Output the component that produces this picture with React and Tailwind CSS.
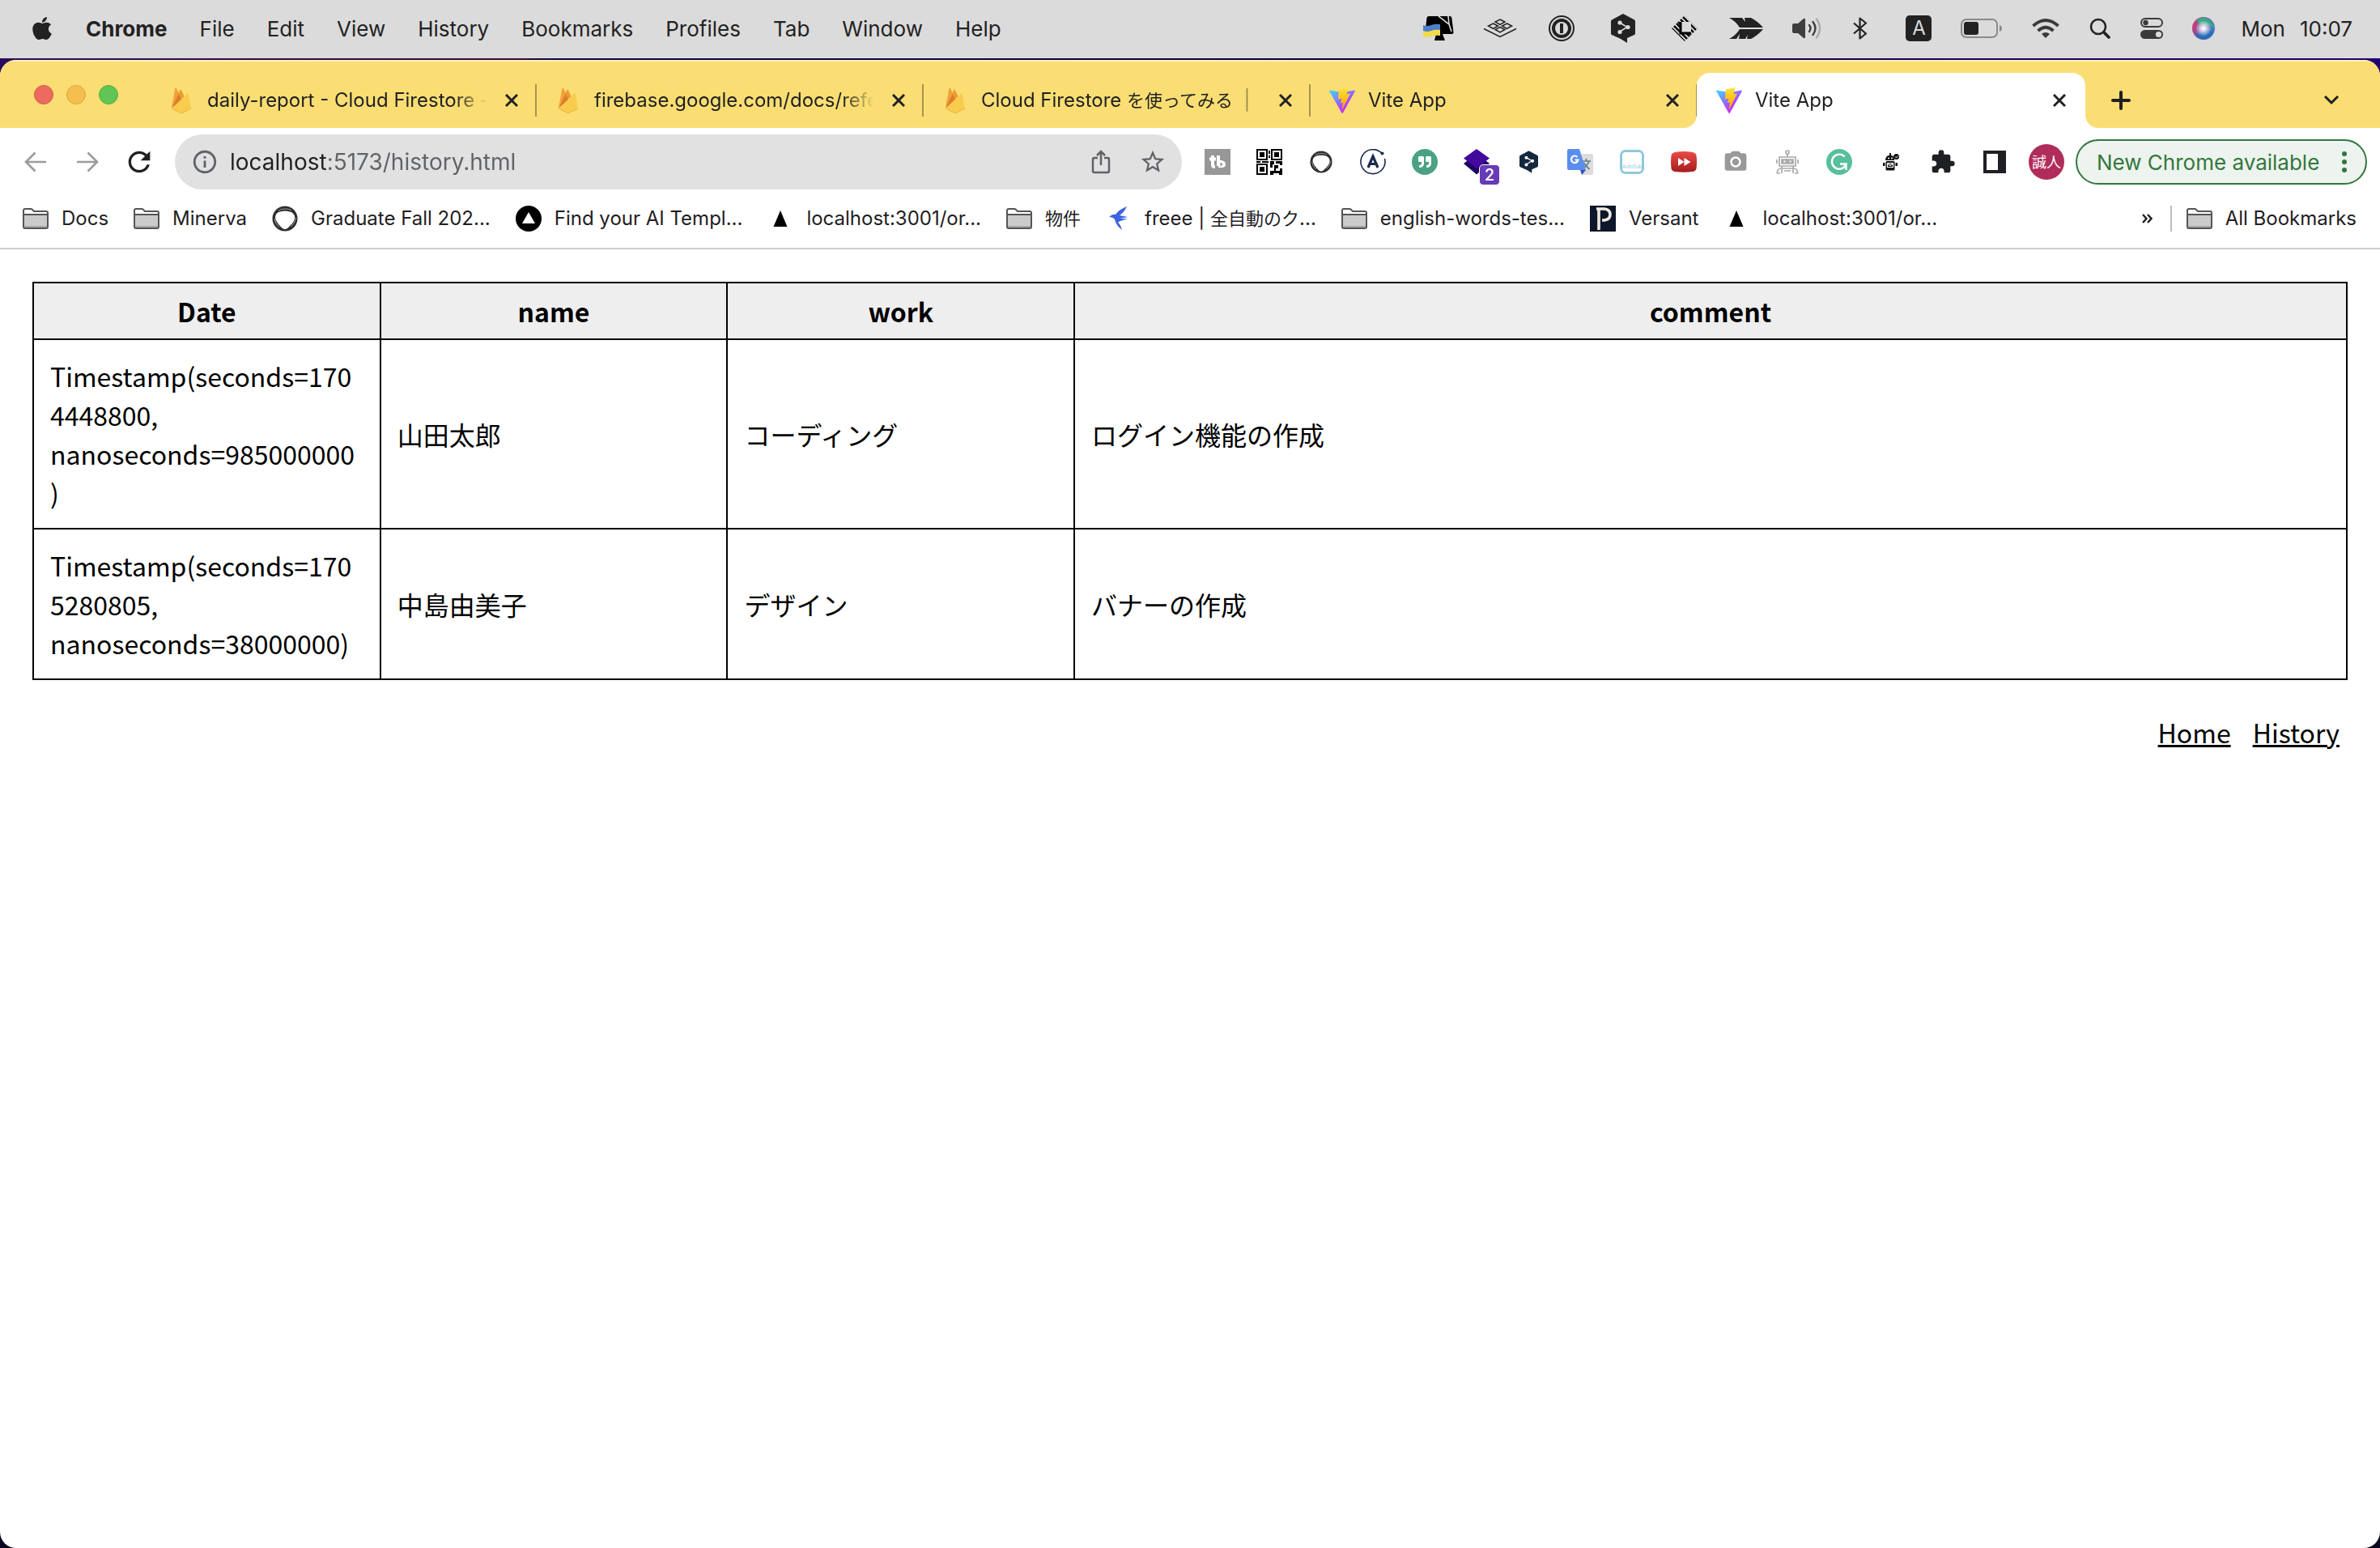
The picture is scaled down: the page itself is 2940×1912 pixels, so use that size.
import React from "react";
import { FaApple, FaQuoteRight } from "react-icons/fa";
import {
  MdExtension,
  MdInfoOutline,
  MdPhotoCamera,
  MdRefresh,
  MdStarBorder,
} from "react-icons/md";

const menus = ["File", "Edit", "View", "History", "Bookmarks", "Profiles", "Tab", "Window", "Help"];

/* ---------- Menu bar status icons ---------- */

function MonitorFlagIcon() {
  return (
    <svg viewBox="0 0 38 32" className="h-8 w-[38px]">
      <path d="M7 1h26q2 0 2.300 2l2.200 18q.2 2-2 2H4q-2 0-1.500-2L4.500 3Q5 1 7 1z" fill="#000" />
      <path d="M16 23h8l3 8H14z" fill="#000" />
      <path d="M19 1l13 10 3 9M31 1l1 10" stroke="#dbdbdb" strokeWidth="1.600" fill="none" />
      <path d="M0 12q5 2 10 0t11-1v8q-6-1-11 1t-10 0z" fill="#4f7fc9" />
      <path d="M0 19q5 2 10 0t11-1v7q-6-1-11 1t-10 0z" fill="#f2dc4a" />
    </svg>
  );
}

function TilesIcon() {
  return (
    <svg viewBox="0 0 42 24" className="h-6 w-[42px]" fill="none" stroke="#222" strokeWidth="1.500">
      <path d="M21 1l6 3-6 3.500L15 4zM12.500 6l6 3-6 3.500-6-3.500zM29.500 6l6 3-6 3.500-6-3.500zM21 10.500l6 3-6 3.500-6-3.500z" />
      <path d="M1 12.500l20 10 20-10" />
    </svg>
  );
}

function OnePasswordIcon() {
  return (
    <svg viewBox="0 0 32 32" className="h-8 w-[38px]">
      <circle cx="16" cy="16" r="15" fill="none" stroke="#222" strokeWidth="2" />
      <circle cx="16" cy="16" r="10" fill="none" stroke="#222" strokeWidth="4" />
      <rect x="14" y="10" width="4" height="12" fill="#222" />
    </svg>
  );
}

function DeepLIcon({ className, fill, dot }) {
  return (
    <svg viewBox="0 0 30 36" className={className}>
      <path d="M15 0l14 7.500q1 .5 1 2V24q0 1.500-1 2l-9 4v6l-8-5L1 26q-1-.5-1-2V9.500Q0 8 1 7.500z" fill={fill} />
      <g stroke={dot} strokeWidth="1.600" fill={dot}>
        <path d="M11 11l9 5.500-9 5.500" fill="none" />
        <circle cx="11" cy="11" r="1.800" />
        <circle cx="21" cy="16.500" r="1.800" />
        <circle cx="11" cy="22.500" r="1.800" />
      </g>
    </svg>
  );
}

function ChipIcon() {
  return (
    <svg viewBox="0 0 32 32" className="h-8 w-[38px]">
      <defs>
        <clipPath id="chipRing">
          <path d="M16 0l16 16-16 16L0 16zM12 8v13h12V8z" clipRule="evenodd" />
        </clipPath>
      </defs>
      <g clipPath="url(#chipRing)" stroke="#000" strokeWidth="2.400">
        <path d="M-8 8l32 32M-5 5l32 32M-2 2l32 32M1 1l32 32M5-1l32 32M10-2l32 32M15-3l32 32" />
      </g>
      <path d="M11 8v14h13" fill="none" stroke="#000" strokeWidth="3" />
    </svg>
  );
}

function FeatherIcon() {
  return (
    <svg viewBox="0 0 42 26" className="h-[26px] w-[42px]" fill="#222">
      <path d="M0 0h16l4 5-1-5h8q8 4 15 12H13Q8 4 0 0z" />
      <path d="M0 26h9l4-6-1 6h8l3-5-1 5h5q8-4 15-12H13Q8 22 0 26z" />
    </svg>
  );
}

function SpeakerIcon() {
  return (
    <svg viewBox="0 0 36 26" className="h-[26px] w-9">
      <path d="M0 9q0-2 2-2h5l7-6q2-1 2 1v22q0 2-2 1l-7-6H2q-2 0-2-2z" fill="#3e3e3e" />
      <g fill="none" strokeWidth="2.400" strokeLinecap="round">
        <path d="M21 9q3 4 0 8" stroke="#3e3e3e" />
        <path d="M25.500 5q6 8 0 16" stroke="#3e3e3e" />
        <path d="M30 1.500q8 11.500 0 23" stroke="#aaa" />
      </g>
    </svg>
  );
}

function BluetoothIcon() {
  return (
    <svg viewBox="0 0 24 28" className="h-7 w-6" fill="none" stroke="#222" strokeWidth="2.200" strokeLinejoin="round">
      <path d="M4 7.500l15 13-7.500 6V1.500l7.500 6-15 13" />
    </svg>
  );
}

function BatteryIcon() {
  return (
    <svg viewBox="0 0 52 24" className="h-6 w-[52px]">
      <rect x="1" y="1" width="44" height="22" rx="6" fill="none" stroke="#8a8a8a" strokeWidth="2" />
      <rect x="4" y="4" width="18" height="16" rx="3" fill="#222" />
      <path d="M48 8q3 1 3 4t-3 4z" fill="#8a8a8a" />
    </svg>
  );
}

function WifiIcon() {
  return (
    <svg viewBox="0 0 34 24" className="h-6 w-[34px]" fill="none" stroke="#3a3a3a" strokeWidth="3.800">
      <path d="M1.500 9q15.500-14 31 0" />
      <path d="M7.500 15q9.500-8.500 19 0" />
      <path d="M12 19q5-4 10 0l-5 5z" fill="#3a3a3a" stroke="none" />
    </svg>
  );
}

function SearchIcon() {
  return (
    <svg viewBox="0 0 28 28" className="size-7" fill="none" stroke="#222" strokeLinecap="round">
      <circle cx="12" cy="12" r="9" strokeWidth="2.600" />
      <path d="M19 19l6 6" strokeWidth="3.800" />
    </svg>
  );
}

function ControlCenterIcon() {
  return (
    <svg viewBox="0 0 28 26" className="h-[26px] w-7">
      <rect x="1" y="1" width="26" height="10" rx="5" fill="none" stroke="#3a3a3a" strokeWidth="2" />
      <circle cx="6.500" cy="6" r="3.200" fill="#3a3a3a" />
      <rect x="0" y="15" width="28" height="11" rx="5.500" fill="#3a3a3a" />
      <circle cx="22.500" cy="20.500" r="3.600" fill="#dbdbdb" />
    </svg>
  );
}

function SiriIcon() {
  return (
    <svg viewBox="0 0 28 28" className="size-7">
      <defs>
        <radialGradient id="siriGlow">
          <stop offset="0" stopColor="#fff" />
          <stop offset="0.3" stopColor="#fff" stopOpacity="0.8" />
          <stop offset="1" stopColor="#fff" stopOpacity="0" />
        </radialGradient>
        <linearGradient id="siriBase" x1="0" y1="0.3" x2="1" y2="0.7">
          <stop offset="0" stopColor="#d6336c" />
          <stop offset="0.4" stopColor="#7a5aa6" />
          <stop offset="1" stopColor="#2f7fc9" />
        </linearGradient>
      </defs>
      <circle cx="14" cy="14" r="14" fill="url(#siriBase)" />
      <path d="M5 4q9-7 17 0 5 5 5 10-8-5-13-4Q8 9 5 4z" fill="#3aa787" />
      <path d="M3 20q8 2 12-4 6 1 11 2-4 10-12 10Q7 27 3 20z" fill="#2b6cb8" />
      <circle cx="14" cy="14" r="10" fill="url(#siriGlow)" />
    </svg>
  );
}

function MenuBar() {
  return (
    <header className="flex h-[72px] items-center justify-between bg-[#dbdbdb] pr-[34px] pb-[2px] pl-[38px] text-[26px] text-[#222]">
      <nav className="flex items-center gap-10">
        <button aria-label="Apple menu">
          <FaApple className="h-8 w-[28px]" />
        </button>
        <button className="font-bold">Chrome</button>
        {menus.map((m) => (
          <button key={m}>{m}</button>
        ))}
      </nav>
      <div className="flex items-center gap-8">
        <div className="flex items-center gap-9">
          <MonitorFlagIcon />
          <TilesIcon />
          <OnePasswordIcon />
          <DeepLIcon className="h-9 w-[42px]" fill="#222" dot="#dbdbdb" />
          <ChipIcon />
          <FeatherIcon />
          <SpeakerIcon />
          <BluetoothIcon />
          <span className="flex w-10 justify-end">
            <span className="flex size-8 items-center justify-center rounded-[5px] bg-[#222] text-2xl text-[#dbdbdb]">A</span>
          </span>
          <BatteryIcon />
          <WifiIcon />
          <SearchIcon />
          <ControlCenterIcon />
          <SiriIcon />
        </div>
        <div className="flex gap-[18px]">
          <span>Mon</span>
          <span>10:07</span>
        </div>
      </div>
    </header>
  );
}

/* ---------- Tab strip ---------- */

function FirebaseIcon() {
  return (
    <svg viewBox="0 0 24 32" className="h-8 w-8 shrink-0">
      <path d="M0 25L4.500.8q.5-1.200 1.200 0L9 7z" fill="#f0a13a" />
      <path d="M0 25.500L10.500 3q.6-1 1.200 0l4 8z" fill="#f09a35" />
      <path d="M0 25.500L8.500 8l4.500 8z" fill="#dd7f2d" />
      <path d="M0 26L19.500 7.500q1-.8 1.300.4L24 26l-10.500 5.500q-1.500.8-3 0z" fill="#f8cc4d" />
      <path d="M0 25.500l10.500 5.500q1.500.8 3 0L24 25.500v.7l-10.500 5.500q-1.500.6-3 0L0 26.200z" fill="#e3ac45" />
    </svg>
  );
}

function ViteIcon({ id }) {
  return (
    <svg viewBox="0 0 256 257" className="h-8 w-8 shrink-0">
      <defs>
        <linearGradient id={`${id}a`} x1="-.828%" x2="57.636%" y1="7.652%" y2="78.411%">
          <stop offset="0%" stopColor="#41D1FF" />
          <stop offset="100%" stopColor="#BD34FE" />
        </linearGradient>
        <linearGradient id={`${id}b`} x1="43.376%" x2="50.316%" y1="2.242%" y2="89.03%">
          <stop offset="0%" stopColor="#FFEA83" />
          <stop offset="8.333%" stopColor="#FFDD35" />
          <stop offset="100%" stopColor="#FFA800" />
        </linearGradient>
      </defs>
      <path
        fill={`url(#${id}a)`}
        d="M255.153 37.938L134.897 252.976c-2.483 4.440-8.862 4.466-11.382.048L.875 37.958c-2.746-4.814 1.371-10.646 6.827-9.670l120.385 21.517a6.537 6.537 0 0 0 2.322-.004l117.867-21.483c5.438-.991 9.574 4.796 6.877 9.620Z"
      />
      <path
        fill={`url(#${id}b)`}
        d="M185.432.063L96.440 17.501a3.268 3.268 0 0 0-2.634 3.014l-5.474 92.456a3.268 3.268 0 0 0 3.997 3.378l24.777-5.718c2.318-.535 4.413 1.507 3.936 3.838l-7.361 36.047c-.495 2.426 1.782 4.500 4.151 3.780l15.304-4.649c2.372-.720 4.652 1.360 4.150 3.788l-11.698 56.621c-.732 3.542 3.979 5.473 5.943 2.437l1.313-2.028l72.516-144.720c1.215-2.423-.880-5.186-3.540-4.672l-25.505 4.922c-2.396.462-4.435-1.770-3.759-4.114l16.646-57.705c.677-2.350-1.370-4.583-3.769-4.113Z"
      />
    </svg>
  );
}

function CloseIcon() {
  return (
    <svg viewBox="0 0 16 16" className="size-4" stroke="currentColor" strokeWidth="3">
      <path d="M1 1l14 14M15 1L1 15" />
    </svg>
  );
}

function Flare({ className }) {
  return (
    <svg viewBox="0 0 16 16" className={className} fill="#fff">
      <path d="M16 0v16H0A16 16 0 0 0 16 0z" />
    </svg>
  );
}

function Tab({ icon, title, active }) {
  const shape = active
    ? "relative flex h-[68px] w-[480px] items-center rounded-t-2xl bg-white pl-6"
    : "relative flex h-[68px] w-[478px] items-center pl-6";
  return (
    <div className={shape}>
      <button className="flex min-w-0 flex-1 items-center gap-4 text-left">
        {icon}
        <span className="min-w-0 flex-1 whitespace-pre [mask-image:linear-gradient(90deg,#000_86%,transparent_97%)]">
          {title}
        </span>
      </button>
      <button aria-label="Close tab" className={active ? "mr-6 ml-3" : "mr-[21px] ml-3"}>
        <CloseIcon />
      </button>
      {active ? (
        <>
          <Flare className="absolute bottom-0 -left-4 size-4" />
          <Flare className="absolute -right-4 bottom-0 size-4 -scale-x-100" />
        </>
      ) : (
        <span className="-mr-px h-10 w-[2px] bg-[#a89351]" />
      )}
    </div>
  );
}

function TabStrip() {
  return (
    <div className="flex h-[84px] items-end border-t-2 border-[#fdf1bd] bg-[#fade73] pr-[50px] text-[24px]">
      <div className="flex h-[82px] w-[184px] shrink-0 items-center gap-4 pl-[42px]">
        <button aria-label="Close window" className="size-6 rounded-full border border-[#d9574c] bg-[#ec6a5e]" />
        <button aria-label="Minimize window" className="size-6 rounded-full border border-[#dfa53d] bg-[#f4bf4f]" />
        <button aria-label="Zoom window" className="size-6 rounded-full border border-[#52ae43] bg-[#61c555]" />
      </div>
      <Tab icon={<FirebaseIcon />} title="daily-report - Cloud Firestore -" />
      <Tab icon={<FirebaseIcon />} title="firebase.google.com/docs/refe" />
      <Tab
        icon={<FirebaseIcon />}
        title={
          <>
            Cloud Firestore <span className="text-[22px]">を使ってみる</span>
            {"  |"}
          </>
        }
      />
      <Tab icon={<ViteIcon id="v1" />} title="Vite App" />
      <Tab icon={<ViteIcon id="v2" />} title="Vite App" active />
      <div className="flex h-[68px] flex-1 items-center justify-between pl-8">
        <button aria-label="New tab">
          <svg viewBox="0 0 24 24" className="size-6" stroke="#1f2023" strokeWidth="4" strokeLinecap="round">
            <path d="M12 2v20M2 12h20" />
          </svg>
        </button>
        <button aria-label="Search tabs">
          <svg viewBox="0 0 20 12" className="h-3 w-5" fill="none" stroke="#1f2023" strokeWidth="3">
            <path d="M2 1l8 8 8-8" />
          </svg>
        </button>
      </div>
    </div>
  );
}

/* ---------- Toolbar ---------- */

function ArrowIcon({ className }) {
  return (
    <svg viewBox="0 0 28 26" className={className} fill="none" stroke="#9b9b9b" strokeWidth="2.600">
      <path d="M27 13H2M13.500 1.500L2 13l11.500 11.500" />
    </svg>
  );
}

function ShareIcon() {
  return (
    <svg viewBox="0 0 24 30" className="h-[30px] w-6" fill="none" stroke="#5f6368" strokeWidth="2.500">
      <path d="M8 10H4q-2 0-2 2v14q0 2 2 2h16q2 0 2-2V12q0-2-2-2h-4M12 19V2M7 7l5-5 5 5" />
    </svg>
  );
}

function SketchRing({ className }) {
  return (
    <svg viewBox="0 0 32 32" className={className}>
      <circle cx="16" cy="16" r="15.500" fill="#2e2e2e" />
      <path d="M8 8q8-3 16 0 5 3 4 8-1 5-6 9-3 4-6 4-3 0-6-4-5-5-6-10 0-5 4-7z" fill="#fff" />
      <g fill="none" stroke="#bbb" strokeWidth="0.800">
        <path d="M8 6q8-4 16-.5" />
        <path d="M3 16q1 7 6 10.500M29.500 15q-1 7-6 11" />
      </g>
    </svg>
  );
}

function TubeIcon() {
  return (
    <svg viewBox="0 0 32 32" className="size-8">
      <rect width="32" height="32" fill="#979797" />
      <path d="M10 8v12q0 2 3 2M6 12.500h8M17 8v13" stroke="#fff" strokeWidth="4" fill="none" />
      <path d="M17 14h4q5 1 5 5t-5 4h-4z" fill="#fff" />
      <path d="M19.500 16.500l3.500 2.500-3.500 2.500z" fill="#979797" />
    </svg>
  );
}

function QrIcon() {
  return (
    <svg viewBox="0 0 32 32" className="size-8">
      <g fill="none" stroke="#000" strokeWidth="2">
        <rect x="1" y="1" width="12" height="12" />
        <rect x="19" y="1" width="12" height="12" />
        <rect x="1" y="19" width="12" height="12" />
      </g>
      <path
        d="M4 4h6v6H4zM22 4h6v6h-6zM4 22h6v6H4zM15 2h2v4h-2zM15 8h2v3h-2zM0 15h5v2H0zM7 15h8v2H7zM17 15h5v4h-2v4h-3zM24 15h8v5h-3v-2h-5zM22 20h5v4h-3v3h5v-3h3v8h-4v-2h-7v2h-4v-5h5z"
        fill="#000"
      />
    </svg>
  );
}

function ApolloIcon() {
  return (
    <svg viewBox="0 0 32 32" className="size-8">
      <path d="M27 5.500A15 15 0 1 0 30.500 12" fill="none" stroke="#1b2a4e" strokeWidth="1.600" />
      <circle cx="27.500" cy="5.500" r="2" fill="#1b2a4e" />
      <path d="M10 23l6-14 6 14M12.500 18.500h7" fill="none" stroke="#1b2a4e" strokeWidth="3.200" />
    </svg>
  );
}

function LayersIcon() {
  return (
    <span className="relative">
      <svg viewBox="0 0 32 32" className="size-8">
        <path d="M0 18l16 13.500L32 18l-4-3H4z" fill="#1c0066" />
        <path d="M16 0l16 11.500L16 24 0 11.500z" fill="#430a9e" />
      </svg>
      <span className="absolute top-[19px] left-[19px] flex size-[26px] items-center justify-center rounded-[5px] border border-white bg-[#673ab7] text-[20px] font-medium text-white">
        2
      </span>
    </span>
  );
}

function TranslateIcon() {
  return (
    <svg viewBox="0 0 32 32" className="size-8">
      <path d="M13 6h17q2 0 2 2v22q0 2-2 2H18z" fill="#dcdcdc" />
      <g fill="none" stroke="#607d8b" strokeWidth="1.700">
        <path d="M18 15h11M23.500 12v3M27 15q-2 6-8 9M20.500 17q2 4 7 8" />
      </g>
      <path d="M16 26h7l-5 6z" fill="#3a4fb8" />
      <path d="M2 0h13l8 26H2q-2 0-2-2V2q0-2 2-2z" fill="#5a8dee" />
      <path d="M12.500 10A4.300 4.300 0 1 0 13.500 13.500H9.500" fill="none" stroke="#fff" strokeWidth="2.200" />
    </svg>
  );
}

function AutoSubIcon() {
  return (
    <span className="flex size-[30px] items-end justify-center rounded-[7px] border-3 border-[#8fc9dd] text-[6px] leading-[12px] text-[#8fc9dd]">
      AutoSub
    </span>
  );
}

function FastForwardIcon() {
  return (
    <svg viewBox="0 0 32 26" className="h-[26px] w-8">
      <defs>
        <linearGradient id="ffRed" x1="0" y1="0" x2="0" y2="1">
          <stop offset="0" stopColor="#ea4c48" />
          <stop offset="1" stopColor="#a51c1c" />
        </linearGradient>
      </defs>
      <path d="M5 1q11-2 22 0 4 1 4.500 4 1 8 0 16-.5 3-4.500 4-11 1.500-22 0-4-1-4.500-4-1-8 0-16Q1 2 5 1z" fill="url(#ffRed)" />
      <path d="M9 8l7.500 5L9 18zM16.500 8l8 5-8 5z" fill="#fff" />
    </svg>
  );
}

function RobotIcon() {
  return (
    <svg viewBox="0 0 28 30" className="h-[30px] w-7" fill="none" stroke="#a9a9a9" strokeWidth="1.700">
      <circle cx="14" cy="3" r="2" />
      <path d="M14 5v4M4 9h20v11H4zM1 12v5M27 12v5M7 20v9M21 20v9M7 23h14M1 29q1-6 5-6M27 29q-1-6-5-6M1 29h4M23 29h4M10 26h8" />
      <path d="M7 12h14v5H7z" fill="#a9a9a9" />
      <path d="M9.500 14.500h2M16.500 14.500h2" stroke="#fff" strokeWidth="2" />
    </svg>
  );
}

function GrammarlyIcon() {
  return (
    <svg viewBox="0 0 32 32" className="size-8">
      <circle cx="16" cy="16" r="16" fill="#57bf9c" />
      <path d="M22.500 9.500A9 9 0 1 0 24.500 18.500H17M24.500 17.500V26" fill="none" stroke="#fff" strokeWidth="2.400" />
    </svg>
  );
}

function MailBotIcon() {
  return (
    <svg viewBox="0 0 20 22" className="h-[22px] w-5">
      <path d="M8 0h2v3h1q3 1 3 6H3q0-5 4-6h1z" fill="#111" />
      <circle cx="7" cy="6.500" r="1" fill="#fff" />
      <circle cx="11" cy="6.500" r="1" fill="#fff" />
      <circle cx="16.500" cy="4.500" r="3.500" fill="#111" />
      <path d="M15 4.500l1.500 1.500 2-2.500" stroke="#fff" fill="none" />
      <rect x="3.500" y="10" width="11" height="11.500" rx="1.500" fill="#111" />
      <path d="M5.500 12.500h7v5h-7zM5.500 12.500l3.500 3 3.500-3" fill="none" stroke="#fff" strokeWidth="1.200" />
      <path d="M0 12h2.500v4H0zM15.500 12H18v4h-2.500z" fill="#111" />
    </svg>
  );
}

const extensions = [
  { name: "TubeBuddy", icon: <TubeIcon /> },
  { name: "QR code", icon: <QrIcon /> },
  { name: "Ring", icon: <SketchRing className="size-7" /> },
  { name: "Apollo", icon: <ApolloIcon /> },
  {
    name: "Quotes",
    icon: (
      <span className="flex size-8 items-center justify-center rounded-full bg-[#4aa283] text-white">
        <FaQuoteRight className="size-4" />
      </span>
    ),
  },
  { name: "Layers", icon: <LayersIcon /> },
  { name: "DeepL", icon: <DeepLIcon className="h-7 w-[23px]" fill="#14283f" dot="#fff" /> },
  { name: "Translate", icon: <TranslateIcon /> },
  { name: "AutoSub", icon: <AutoSubIcon /> },
  { name: "Speed", icon: <FastForwardIcon /> },
  { name: "Camera", icon: <MdPhotoCamera className="size-8 text-[#999]" /> },
  { name: "Robot", icon: <RobotIcon /> },
  { name: "Grammarly", icon: <GrammarlyIcon /> },
  { name: "Mail bot", icon: <MailBotIcon /> },
  { name: "Extensions", icon: <MdExtension className="size-8 text-[#1f2023]" /> },
  {
    name: "Side panel",
    icon: (
      <svg viewBox="0 0 28 28" className="size-7">
        <path d="M0 0h28v28H0zM4 4v20h14V4z" fill="#1f2023" fillRule="evenodd" />
      </svg>
    ),
  },
  {
    name: "Profile",
    icon: (
      <span className="flex size-11 items-center justify-center rounded-full bg-[#b02d5b] text-[18px] whitespace-nowrap text-white">
        誠人
      </span>
    ),
  },
];

function Toolbar() {
  return (
    <div className="flex h-[84px] items-center pr-4 pl-3">
      <button aria-label="Back" className="flex w-16 justify-center">
        <ArrowIcon className="h-[26px] w-7" />
      </button>
      <button aria-label="Forward" className="flex w-16 justify-center">
        <ArrowIcon className="h-[26px] w-7 -scale-x-100" />
      </button>
      <button aria-label="Reload" className="flex w-16 justify-center">
        <MdRefresh className="size-10 text-[#1f2023]" />
      </button>
      <div className="mr-3 ml-3 flex h-[68px] flex-1 items-center rounded-full bg-[#e1e1e1] pr-[19px] pl-5 text-[#5f6368]">
        <button aria-label="View site information">
          <MdInfoOutline className="size-[34px]" />
        </button>
        <input
          aria-label="Address"
          defaultValue="localhost:5173/history.html"
          className="ml-[14px] flex-1 bg-[linear-gradient(90deg,#1f2023_119px,#5f6368_119px)] bg-clip-text text-[28px] text-transparent outline-none"
        />
        <button aria-label="Share" className="mr-[35px]">
          <ShareIcon />
        </button>
        <button aria-label="Bookmark this tab">
          <MdStarBorder className="size-[34px]" />
        </button>
      </div>
      {extensions.map((e) => (
        <button key={e.name} aria-label={e.name} className="flex w-16 items-center justify-center">
          {e.icon}
        </button>
      ))}
      <button className="ml-1 flex h-14 w-[360px] items-center justify-between rounded-full border-2 border-[#33773d] bg-[#edf3ee] pr-[23px] pl-6 text-[26px] text-[#33773d]">
        <span>New Chrome available</span>
        <svg viewBox="0 0 6 26" className="h-[26px] w-[6px]" fill="currentColor">
          <circle cx="3" cy="3" r="3" />
          <circle cx="3" cy="13" r="3" />
          <circle cx="3" cy="23" r="3" />
        </svg>
      </button>
    </div>
  );
}

/* ---------- Bookmarks bar ---------- */

function FolderIcon() {
  return (
    <svg viewBox="0 0 32 26" className="h-[26px] w-8 shrink-0">
      <path d="M1 23V3q0-2 2-2h7q1 0 2 1l2 2h15q2 0 2 2v17q0 2-2 2H3q-2 0-2-2z" fill="#fff" stroke="#555" strokeWidth="2" />
      <path d="M2 8h28v16H2z" fill="#cbcbcb" />
      <path d="M1 8h30" stroke="#555" strokeWidth="2" />
      <path d="M2 22h28v2H2z" fill="#a8a8a8" />
    </svg>
  );
}

function TriangleIcon() {
  return (
    <svg viewBox="0 0 32 32" className="size-8 shrink-0">
      <path d="M16 6l8.500 20h-17z" fill="#000" />
    </svg>
  );
}

function TriangleDiscIcon() {
  return (
    <svg viewBox="0 0 32 32" className="size-8 shrink-0">
      <circle cx="16" cy="16" r="16" fill="#000" />
      <path d="M16 8l8 14H8z" fill="#fff" />
    </svg>
  );
}

function SwallowIcon() {
  return (
    <svg viewBox="0 0 32 32" className="size-8 shrink-0" fill="#3b63e0">
      <path d="M4 14q5-4 8-3Q16 5 26 1q-4 8-9 11l10 2-10 2 10 0-9 3q-1 1-3 1 4 5 5 10Q13 25 11 17q-2-3-7-3z" />
    </svg>
  );
}

function VersantIcon() {
  return (
    <svg viewBox="0 0 32 32" className="size-8 shrink-0">
      <rect width="32" height="32" fill="#0d172b" />
      <path d="M11 4v26M8 4h10q7 1 7 7t-7 7h-3" fill="none" stroke="#efeade" strokeWidth="3.600" />
    </svg>
  );
}

function Ja({ children }) {
  return <span className="text-[22px]">{children}</span>;
}

const bookmarks = [
  { icon: <FolderIcon />, label: "Docs" },
  { icon: <FolderIcon />, label: "Minerva" },
  { icon: <SketchRing className="size-8 shrink-0" />, label: "Graduate Fall 202..." },
  { icon: <TriangleDiscIcon />, label: "Find your AI Templ..." },
  { icon: <TriangleIcon />, label: "localhost:3001/or..." },
  { icon: <FolderIcon />, label: <Ja>物件</Ja> },
  {
    icon: <SwallowIcon />,
    label: (
      <>
        freee | <Ja>全自動のク</Ja>...
      </>
    ),
  },
  { icon: <FolderIcon />, label: "english-words-tes..." },
  { icon: <VersantIcon />, label: "Versant" },
  { icon: <TriangleIcon />, label: "localhost:3001/or..." },
];

function BookmarksBar() {
  return (
    <div className="flex h-[66px] items-center justify-between border-b-2 border-[#cccccc] pr-[29px] pb-2 pl-7 text-[24px] whitespace-nowrap">
      <div className="flex items-center gap-[31px]">
        {bookmarks.map((b, i) => (
          <button key={i} className="flex items-center gap-4">
            {b.icon}
            <span>{b.label}</span>
          </button>
        ))}
      </div>
      <div className="flex items-center">
        <button aria-label="More bookmarks" className="mr-[22px]">
          <svg viewBox="0 0 13 12" className="h-3 w-[13px]" fill="none" stroke="#1f2023" strokeWidth="2.400">
            <path d="M1 1l4.500 5L1 11M7 1l4.500 5L7 11" />
          </svg>
        </button>
        <span className="mr-[18px] h-8 w-[2px] bg-[#bdbdbd]" />
        <button className="flex items-center gap-4">
          <FolderIcon />
          <span>All Bookmarks</span>
        </button>
      </div>
    </div>
  );
}

/* ---------- Page ---------- */

const reports = [
  {
    date: "Timestamp(seconds=1704448800, nanoseconds=985000000)",
    name: "山田太郎",
    work: "コーディング",
    comment: "ログイン機能の作成",
  },
  {
    date: "Timestamp(seconds=1705280805, nanoseconds=38000000)",
    name: "中島由美子",
    work: "デザイン",
    comment: "バナーの作成",
  },
];

function Page() {
  return (
    <main className="flex-1 p-10 font-['Noto_Sans_CJK_JP',sans-serif] text-[32px] leading-[48px] text-black">
      <table className="w-full table-fixed border-collapse border-2 border-black">
        <thead>
          <tr className="bg-[#eeeeee]">
            <th className="w-[15%] border-2 border-black px-5 py-[10px] font-bold">Date</th>
            <th className="w-[15%] border-2 border-black px-5 py-[10px] font-bold">name</th>
            <th className="w-[15%] border-2 border-black px-5 py-[10px] font-bold">work</th>
            <th className="border-2 border-black px-5 py-[10px] font-bold">comment</th>
          </tr>
        </thead>
        <tbody>
          {reports.map((r) => (
            <tr key={r.date}>
              <td className="border-2 border-black p-5 [overflow-wrap:anywhere]">{r.date}</td>
              <td className="border-2 border-black p-5">{r.name}</td>
              <td className="border-2 border-black p-5">{r.work}</td>
              <td className="border-2 border-black p-5">{r.comment}</td>
            </tr>
          ))}
        </tbody>
      </table>
      <nav className="mt-10 flex justify-end gap-[27px] pr-[10px]">
        <a href="#home" className="underline">
          Home
        </a>
        <a href="#history" className="underline">
          History
        </a>
      </nav>
    </main>
  );
}

export default function App() {
  return (
    <div className="flex min-h-screen flex-col bg-[linear-gradient(180deg,transparent_20%,#0a0820_80%),linear-gradient(90deg,#2a0a5c_0%,#3a0838_22%,#0a0848_23%,#08003c_60%,#22006e_100%)] font-['Inter','Noto_Sans_CJK_JP',sans-serif] text-[#1f2023]">
      <MenuBar />
      <div className="mt-[2px] flex flex-1 flex-col overflow-hidden rounded-[20px] bg-white">
        <TabStrip />
        <Toolbar />
        <BookmarksBar />
        <Page />
      </div>
    </div>
  );
}
